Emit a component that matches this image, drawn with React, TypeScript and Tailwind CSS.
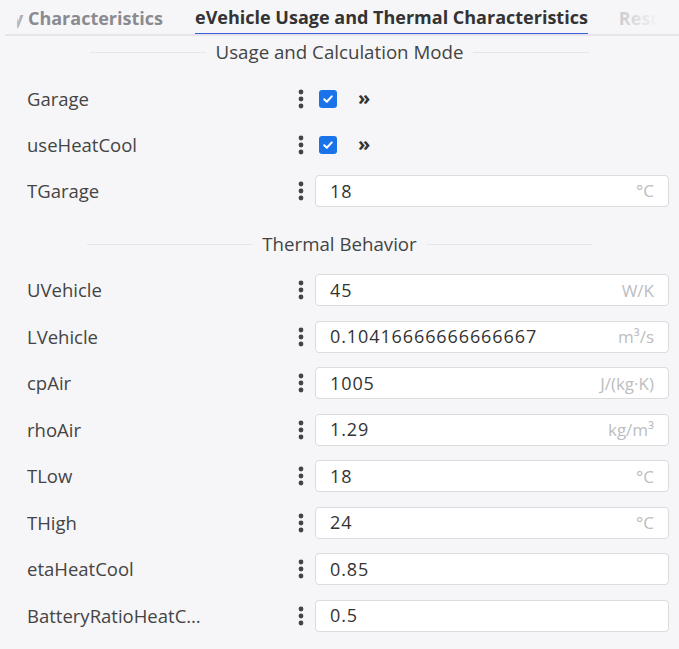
import React from 'react';

type Field = {
    label: string;
    value?: string;
    unit?: React.ReactNode;
    check?: boolean;
};

const usage: Field[] = [
    { label: 'Garage', check: true },
    { label: 'useHeatCool', check: true },
    { label: 'TGarage', value: '18', unit: '°C' },
];

const thermal: Field[] = [
    { label: 'UVehicle', value: '45', unit: 'W/K' },
    { label: 'LVehicle', value: '0.10416666666666667', unit: <>m³/s</> },
    { label: 'cpAir', value: '1005', unit: 'J/(kg·K)' },
    { label: 'rhoAir', value: '1.29', unit: <>kg/m³</> },
    { label: 'TLow', value: '18', unit: '°C' },
    { label: 'THigh', value: '24', unit: '°C' },
    { label: 'etaHeatCool', value: '0.85' },
    { label: 'BatteryRatioHeatCool', value: '0.5' },
];

const Dots = () => (
    <svg width="8" height="22" viewBox="0 0 8 22" className="text-[#444]">
        <circle cx="4" cy="4" r="2.4" fill="currentColor" />
        <circle cx="4" cy="11" r="2.4" fill="currentColor" />
        <circle cx="4" cy="18" r="2.4" fill="currentColor" />
    </svg>
);

const Checkbox = () => (
    <span className="w-[18px] h-[18px] rounded-[3px] bg-[#1a73e8] flex items-center justify-center">
        <svg width="12" height="12" viewBox="0 0 12 12">
            <path d="M2.2 6.3l2.6 2.5 5-5.4" stroke="white" strokeWidth="2" fill="none" strokeLinecap="round" strokeLinejoin="round" />
        </svg>
    </span>
);

const SectionTitle = ({ title, className }: { title: string; className: string }) => (
    <div className={`flex items-center ${className}`}>
        <div className="flex-1 h-px bg-[#e5e5ea]" />
        <span className="px-[10px] text-[18.7px] text-[#444]">{title}</span>
        <div className="flex-1 h-px bg-[#e5e5ea]" />
    </div>
);

const Row = ({ field, tall }: { field: Field; tall?: boolean }) => (
    <div className={`flex items-center ${tall ? 'h-[46.5px]' : 'h-[46px]'}`}>
        <div className="w-[286px] pl-[27px]">
            <div className="max-w-[180px] text-[18.5px] text-[#444] truncate">{field.label}</div>
        </div>
        <div className="w-[29px] flex justify-center">
            <Dots />
        </div>
        {field.check ? (
            <div className="flex items-center gap-[21px] pl-[4px]">
                <Checkbox />
                <span className="text-[20px] font-bold text-[#333] leading-none -mt-[3px]">»</span>
            </div>
        ) : (
            <div className="flex-1 mr-[10px] h-[32px] bg-white border border-[#dcdce0] rounded-[4px] flex items-center pl-[14px] pr-[14px]">
                <span className="flex-1 text-[18px] tracking-[0.9px] text-[#333]">{field.value}</span>
                {field.unit && <span className="text-[17px] text-[#bdbdc2]">{field.unit}</span>}
            </div>
        )}
    </div>
);

export default function App() {
    return (
        <div className="w-[679px] h-[649px] bg-[#f6f6f8] overflow-hidden font-['Open_Sans',sans-serif]">
            {/* Tab strip, scrolled to the active tab */}
            <div className="relative h-[36px] ml-[5px] border-b-2 border-[#e6e6ea] overflow-hidden">
                <div className="flex items-end h-full text-[18px] font-bold whitespace-nowrap">
                    <div className="shrink-0 ml-[12px] w-[146px] flex justify-end overflow-hidden pb-[2px] mr-[32px] text-[#8a8a90]">
                        <span className="shrink-0">Battery Characteristics</span>
                    </div>
                    <div className="shrink-0 pb-[2px] mr-[31px] text-[#333] border-b-[3px] border-[#3b5bdb] -mb-[2px]">
                        eVehicle Usage and Thermal Characteristics
                    </div>
                    <div className="shrink-0 pb-[2px] text-[#c8c8cc]">Results</div>
                </div>
                <div className="absolute left-0 top-0 h-full w-[24px] bg-gradient-to-r from-[#f6f6f8] to-transparent" />
                <div className="absolute left-[610px] top-0 h-full w-[45px] bg-gradient-to-l from-[#f6f6f8] to-transparent" />
                <div className="absolute left-[655px] top-0 h-full w-[20px] bg-[#f6f6f8]" />
            </div>

            <SectionTitle title="Usage and Calculation Mode" className="h-[33px] mx-[90px]" />
            <div className="mt-[7px]">
                {usage.map((f) => (
                    <Row key={f.label} field={f} />
                ))}
            </div>

            <SectionTitle title="Thermal Behavior" className="h-[53px] mx-[87px] pt-[7px]" />
            <div>
                {thermal.map((f) => (
                    <Row key={f.label} field={f} tall />
                ))}
            </div>
        </div>
    );
}
